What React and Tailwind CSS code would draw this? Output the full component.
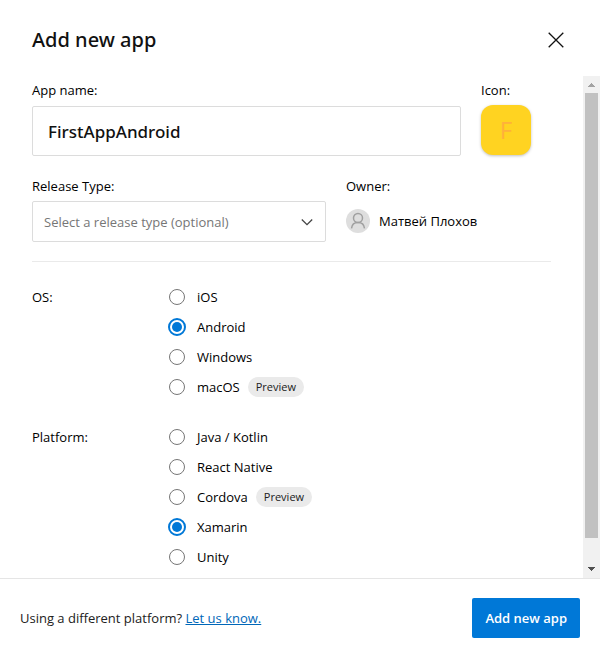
import { useState } from 'react';

const systems = [
  { name: 'iOS' },
  { name: 'Android' },
  { name: 'Windows' },
  { name: 'macOS', preview: true },
];

const platforms = [
  { name: 'Java / Kotlin' },
  { name: 'React Native' },
  { name: 'Cordova', preview: true },
  { name: 'Xamarin' },
  { name: 'Unity' },
];

function RadioGroup({ legend, name, options, initial }) {
  const [value, setValue] = useState(initial);
  return (
    <div role="radiogroup" aria-label={legend} className="mt-5 flex">
      <div className="w-[136px] shrink-0 leading-[30px]">{legend}</div>
      <div className="flex flex-col">
        {options.map((option) => (
          <label key={option.name} className="flex h-[30px] items-center">
            <span className="flex size-[18px] items-center justify-center">
              <input
                type="radio"
                name={name}
                checked={value === option.name}
                onChange={() => setValue(option.name)}
                className="grid size-4 shrink-0 appearance-none place-content-center rounded-full border border-[#767676] bg-white before:size-[10px] before:rounded-full checked:size-[18px] checked:border-2 checked:border-[#0078d7] checked:before:bg-[#0078d7]"
              />
            </span>
            <span className="ml-[11px]">{option.name}</span>
            {option.preview && (
              <span className="ml-2 rounded-full bg-[#eaeaea] px-2 text-[11px] leading-5 text-[#212121]">
                Preview
              </span>
            )}
          </label>
        ))}
      </div>
    </div>
  );
}

function ScrollTrack() {
  return (
    <div aria-hidden="true" className="flex w-[17px] shrink-0 flex-col items-center bg-[#f1f1f1]">
      <svg className="size-[17px] shrink-0" viewBox="0 0 17 17" shapeRendering="crispEdges">
        <path d="M5 11h7L8.500 7z" fill="#a3a3a3" />
      </svg>
      <div className="w-[13px] grow bg-[#c1c1c1]" />
      <div className="h-[23px] shrink-0" />
      <svg className="size-[17px] shrink-0" viewBox="0 0 17 17" shapeRendering="crispEdges">
        <path d="M5 6h7L8.500 10z" fill="#505050" />
      </svg>
    </div>
  );
}

export default function App() {
  const [appName, setAppName] = useState('FirstAppAndroid');
  return (
    <div className="flex h-screen flex-col bg-white font-['Segoe_UI','Open_Sans','Noto_Sans',sans-serif] text-[13px] leading-5 text-black">
      <header className="flex h-[76px] shrink-0 items-center justify-between pt-1 pr-9 pl-8">
        <h1 className="font-['Segoe_UI','Noto_Sans',sans-serif] text-[20px] leading-7 font-medium text-[#111]">
          Add new app
        </h1>
        <button type="button" aria-label="Close" className="text-[#111]">
          <svg className="size-4" viewBox="0 0 16 16" fill="none" stroke="currentColor" strokeWidth="1.300">
            <path d="M.7.700l14.600 14.600M15.300.700L.7 15.300" />
          </svg>
        </button>
      </header>

      <div className="flex min-h-0 grow">
        <main className="min-w-0 grow overflow-hidden px-8 pt-1">
          <div className="flex gap-5">
            <div className="flex min-w-0 grow flex-col gap-1.5">
              <label htmlFor="app-name">App name:</label>
              <input
                id="app-name"
                value={appName}
                onChange={(e) => setAppName(e.target.value)}
                className="h-[50px] w-full rounded-[2px] border border-[#dcdcdc] px-[15px] font-['Segoe_UI','Noto_Sans',sans-serif] text-[17px] font-medium text-[#111] outline-none"
              />
            </div>
            <div className="flex w-[70px] shrink-0 flex-col gap-[5px]">
              <span>Icon:</span>
              <div className="flex size-[50px] items-center justify-center rounded-xl bg-[#ffd321] text-[24px] text-[#ffb13b] shadow-[0_1px_3px_rgba(0,0,0,0.25)]">
                F
              </div>
            </div>
          </div>

          <div className="mt-5 flex gap-5">
            <div className="flex min-w-0 grow flex-col gap-[5px]">
              <label htmlFor="release-type">Release Type:</label>
              <div className="relative">
                <select
                  id="release-type"
                  defaultValue=""
                  className="h-[41px] w-full appearance-none rounded-[2px] border border-[#dcdcdc] bg-white px-[11px] text-[#767676] outline-none"
                >
                  <option value="">Select a release type (optional)</option>
                  <option>Alpha</option>
                  <option>Beta</option>
                  <option>Production</option>
                </select>
                <svg
                  className="pointer-events-none absolute top-4 right-[13px] h-2.5 w-3"
                  viewBox="0 0 12 10"
                  fill="none"
                  stroke="#444"
                  strokeWidth="1.300"
                >
                  <path d="M.8 2.500L6 7.700l5.200-5.200" />
                </svg>
              </div>
            </div>
            <div className="flex w-[205px] shrink-0 flex-col gap-[5px]">
              <span>Owner:</span>
              <div className="flex h-10 items-center gap-[9px]">
                <svg className="size-6" viewBox="0 0 24 24" fill="none" stroke="#a0a0a0" strokeWidth="1.500">
                  <circle cx="12" cy="12" r="12" fill="#dedede" stroke="none" />
                  <circle cx="12" cy="9" r="4.500" />
                  <path d="M5.500 19.300c.4-3.500 2.900-5.800 6.500-5.800s6.100 2.300 6.500 5.800" />
                </svg>
                <span>Матвей Плохов</span>
              </div>
            </div>
          </div>

          <hr className="mt-[19px] border-[#eaeaea]" />

          <RadioGroup legend="OS:" name="os" options={systems} initial="Android" />
          <RadioGroup legend="Platform:" name="platform" options={platforms} initial="Xamarin" />
        </main>
        <ScrollTrack />
      </div>

      <footer className="flex shrink-0 items-center justify-between border-t border-[#e5e5e5] px-5 pt-[19px] pb-5">
        <p className="text-[#212121]">
          Using a different platform?{' '}
          <a href="#contact" className="text-[#0067b8] underline">
            Let us know.
          </a>
        </p>
        <button type="button" className="h-10 rounded-[2px] bg-[#0078d7] px-[13px] font-semibold text-white">
          Add new app
        </button>
      </footer>
    </div>
  );
}
